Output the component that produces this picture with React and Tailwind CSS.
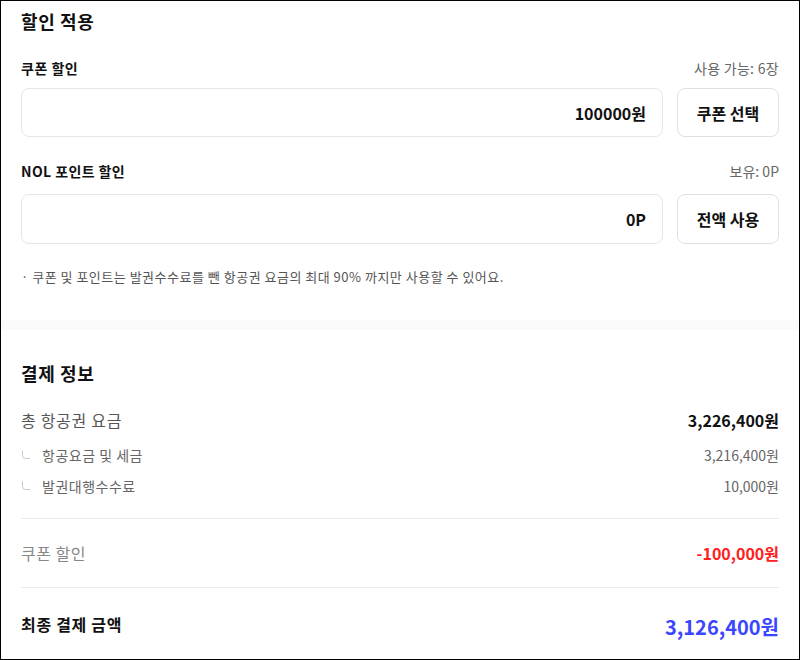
import React from "react";

function Corner() {
  return (
    <svg width="10" height="10" viewBox="0 0 10 10" className="shrink-0">
      <path d="M1.5 0.5 V5.5 Q1.5 8.5 4.5 8.5 H9" fill="none" stroke="#c8c8c8" strokeWidth="1" />
    </svg>
  );
}

export default function App() {
  return (
    <div
      className="w-[800px] h-[660px] border border-black bg-white overflow-hidden text-[#111]"
      style={{ fontFamily: "'Noto Sans CJK KR', 'Noto Sans', sans-serif" }}
    >
      <section className="px-5 pt-[6px] pb-[33px]">
        <h2 className="text-[18px] leading-[28px] font-bold tracking-[0.6px]">할인 적용</h2>

        <div className="mt-[23px] flex justify-between items-center h-[20px]">
          <span className="text-[14px] font-bold tracking-[0.5px]">쿠폰 할인</span>
          <span className="text-[14px] text-[#666] tracking-[0.3px]">사용 가능: 6장</span>
        </div>
        <div className="mt-[10px] flex gap-[14px]">
          <div className="flex-1 h-[49px] rounded-[8px] border border-[#e6e6e6] flex items-center justify-end pr-4 text-[16px] font-bold">
            100000원
          </div>
          <button className="w-[102px] h-[49px] rounded-[8px] border border-[#e0e0e0] bg-white text-[16px] font-bold">
            쿠폰 선택
          </button>
        </div>

        <div className="mt-[24px] flex justify-between items-center h-[20px]">
          <span className="text-[14px] font-bold tracking-[0.4px]">NOL 포인트 할인</span>
          <span className="text-[14px] text-[#666]">보유: 0P</span>
        </div>
        <div className="mt-[13px] flex gap-[14px]">
          <div className="flex-1 h-[50px] rounded-[8px] border border-[#e6e6e6] flex items-center justify-end pr-4 text-[16px] font-bold">
            0P
          </div>
          <button className="w-[102px] h-[50px] rounded-[8px] border border-[#e0e0e0] bg-white text-[16px] font-bold">
            전액 사용
          </button>
        </div>

        <p className="mt-[23px] text-[13px] leading-[20px] text-[#555] tracking-[0.5px]">
          · 쿠폰 및 포인트는 발권수수료를 뺀 항공권 요금의 최대 90% 까지만 사용할 수 있어요.
        </p>
      </section>

      <div className="h-[10px] bg-[#fafafa]" />

      <section className="px-5 pt-[29px]">
        <h2 className="text-[18px] leading-[28px] font-bold tracking-[0.6px]">결제 정보</h2>

        <div className="mt-[21px] flex justify-between items-center h-[24px]">
          <span className="text-[16px] text-[#555] tracking-[0.7px]">총 항공권 요금</span>
          <span className="text-[16px] font-bold">3,226,400원</span>
        </div>
        <div className="mt-[13px] flex justify-between items-center h-[20px]">
          <span className="flex items-center gap-[11px] text-[14px] text-[#666] tracking-[0.5px]">
            <Corner />
            항공요금 및 세금
          </span>
          <span className="text-[14px] text-[#666]">3,216,400원</span>
        </div>
        <div className="mt-[11px] flex justify-between items-center h-[20px]">
          <span className="flex items-center gap-[11px] text-[14px] text-[#666] tracking-[0.5px]">
            <Corner />
            발권대행수수료
          </span>
          <span className="text-[14px] text-[#666]">10,000원</span>
        </div>

        <div className="mt-[22px] h-px bg-[#ececec]" />

        <div className="mt-[22px] flex justify-between items-center h-[24px]">
          <span className="text-[16px] text-[#888] tracking-[0.5px]">쿠폰 할인</span>
          <span className="text-[16px] font-bold text-[#ff2020]">-100,000원</span>
        </div>

        <div className="mt-[22px] h-px bg-[#ececec]" />

        <div className="mt-[24px] flex justify-between items-start">
          <span className="text-[16px] leading-[24px] font-bold tracking-[0.7px]">최종 결제 금액</span>
          <span className="mt-[1px] text-[20px] leading-[28px] font-bold text-[#3b46ff]">3,126,400원</span>
        </div>
      </section>
    </div>
  );
}
